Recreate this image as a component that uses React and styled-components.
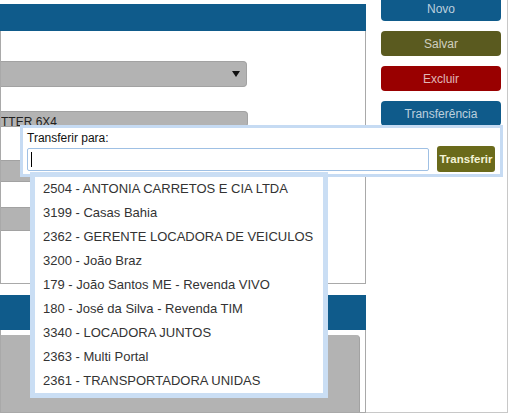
import React from 'react'
import styled, { createGlobalStyle } from 'styled-components'

const Global = createGlobalStyle`
body {
  margin: 0;
  background: #fff;
  font-family: "Liberation Sans", Arial, sans-serif;
}
`

const Page = styled.div`
position: relative;
display: flex;
width: 511px;
height: 416px;
overflow: hidden;
`
const Main = styled.div`
width: 366px;
display: flex;
flex-direction: column;
`
const Panel = styled.section`
margin-top: ${p => p.$top}px;
display: flex;
flex-direction: column;
`
const PanelHeader = styled.div`
height: ${p => p.$h}px;
background: #0f5b8b;
`
const PanelBody = styled.div`
height: ${p => p.$h}px;
box-sizing: border-box;
border: 1px solid #a9a9a9;
border-top: none;
display: flex;
flex-direction: column;
overflow: hidden;
`
const GrayField = styled.div`
margin-top: ${p => p.$gap}px;
width: ${p => p.$w}px;
height: ${p => p.$h}px;
flex-shrink: 0;
box-sizing: border-box;
background: #b3b3b3;
border-radius: 0 4px 4px 0;
border: 1px solid #a2a2a2;
border-left: none;
font-size: 12px;
color: #222;
overflow: hidden;
`
const FieldText = styled.div`
padding: 3px 0 0 0;
line-height: 14px;
white-space: nowrap;
`
const SelectBox = styled(GrayField)`
display: flex;
align-items: center;
justify-content: flex-end;
padding-right: 6px;
`
const Arrow = styled.span`
width: 0;
height: 0;
border-left: 4px solid transparent;
border-right: 4px solid transparent;
border-top: 6px solid #111;
`
const BigGray = styled.div`
margin-top: 5px;
width: 358px;
flex: 1;
background: #b3b3b3;
border-top-right-radius: 4px;
border-right: 1px solid #a2a2a2;
`

const Side = styled.aside`
width: 142px;
height: 413px;
box-sizing: border-box;
border-right: 1px solid #c8c8c8;
border-bottom: 1px solid #c8c8c8;
padding-left: 15px;
display: flex;
flex-direction: column;
gap: 10px;
`
const ActionButton = styled.button`
width: 120px;
height: 25px;
flex-shrink: 0;
margin-top: ${p => p.$first ? '-4px' : '0'};
border: none;
border-radius: 4px;
background: ${p => p.$bg};
color: rgba(255, 255, 255, 0.72);
font-family: "Liberation Sans", Arial, sans-serif;
font-size: 12px;
padding: 0;
`

const Popup = styled.div`
position: absolute;
left: 20px;
top: 125px;
width: 483px;
box-sizing: border-box;
border: 3px solid #c6dbf3;
background: #fff;
padding: 3px 5px 2px 4px;
z-index: 2;
`
const PopupLabel = styled.div`
font-size: 12px;
line-height: 15px;
color: #111;
`
const PopupRow = styled.div`
display: flex;
align-items: center;
gap: 8px;
`
const FakeInput = styled.div`
width: 402px;
height: 23px;
box-sizing: border-box;
border: 1px solid #9fc0e4;
border-radius: 2px;
display: flex;
align-items: center;
padding-left: 3px;
`
const Caret = styled.span`
width: 1px;
height: 15px;
background: #000;
`
const SendButton = styled.button`
width: 58px;
height: 26px;
border: none;
border-radius: 3px;
background: #6a6a1b;
color: #f3f3d6;
font-family: "Liberation Sans", Arial, sans-serif;
font-weight: bold;
font-size: 11.5px;
padding: 0;
`

const Dropdown = styled.ul`
position: absolute;
left: 30px;
top: 172px;
width: 298px;
height: 226px;
box-sizing: border-box;
margin: 0;
padding: 0;
list-style: none;
border: 5px solid #cadef4;
background: #fff;
z-index: 3;
`
const Option = styled.li`
height: 24px;
line-height: 24px;
padding-left: 8px;
font-size: 13px;
color: #333;
white-space: nowrap;
`

const options = [
    "2504 - ANTONIA CARRETOS E CIA LTDA",
    "3199 - Casas Bahia",
    "2362 - GERENTE LOCADORA DE VEICULOS",
    "3200 - João Braz",
    "179 - João Santos ME - Revenda VIVO",
    "180 - José da Silva - Revenda TIM",
    "3340 - LOCADORA JUNTOS",
    "2363 - Multi Portal",
    "2361 - TRANSPORTADORA UNIDAS"
]

const App = () => {
    return (
        <Page>
            <Global />
            <Main>
                <Panel $top={4}>
                    <PanelHeader $h={27} />
                    <PanelBody $h={253}>
                        <SelectBox $gap={30} $w={246} $h={26}><Arrow /></SelectBox>
                        <GrayField $gap={24} $w={247} $h={16}><FieldText>TTER 6X4</FieldText></GrayField>
                        <GrayField $gap={33} $w={247} $h={22} />
                        <GrayField $gap={25} $w={247} $h={24} />
                    </PanelBody>
                </Panel>
                <Panel $top={11}>
                    <PanelHeader $h={35} />
                    <PanelBody $h={83}>
                        <BigGray />
                    </PanelBody>
                </Panel>
            </Main>
            <Side>
                <ActionButton $first $bg="#0f5b8b">Novo</ActionButton>
                <ActionButton $bg="#5a5a1f">Salvar</ActionButton>
                <ActionButton $bg="#990000">Excluir</ActionButton>
                <ActionButton $bg="#0f5b8b">Transferência</ActionButton>
            </Side>

            <Popup>
                <PopupLabel>Transferir para:</PopupLabel>
                <PopupRow>
                    <FakeInput><Caret /></FakeInput>
                    <SendButton>Transferir</SendButton>
                </PopupRow>
            </Popup>
            <Dropdown>
                {options.map(o => <Option key={o}>{o}</Option>)}
            </Dropdown>
        </Page>
    )
}

export default App
